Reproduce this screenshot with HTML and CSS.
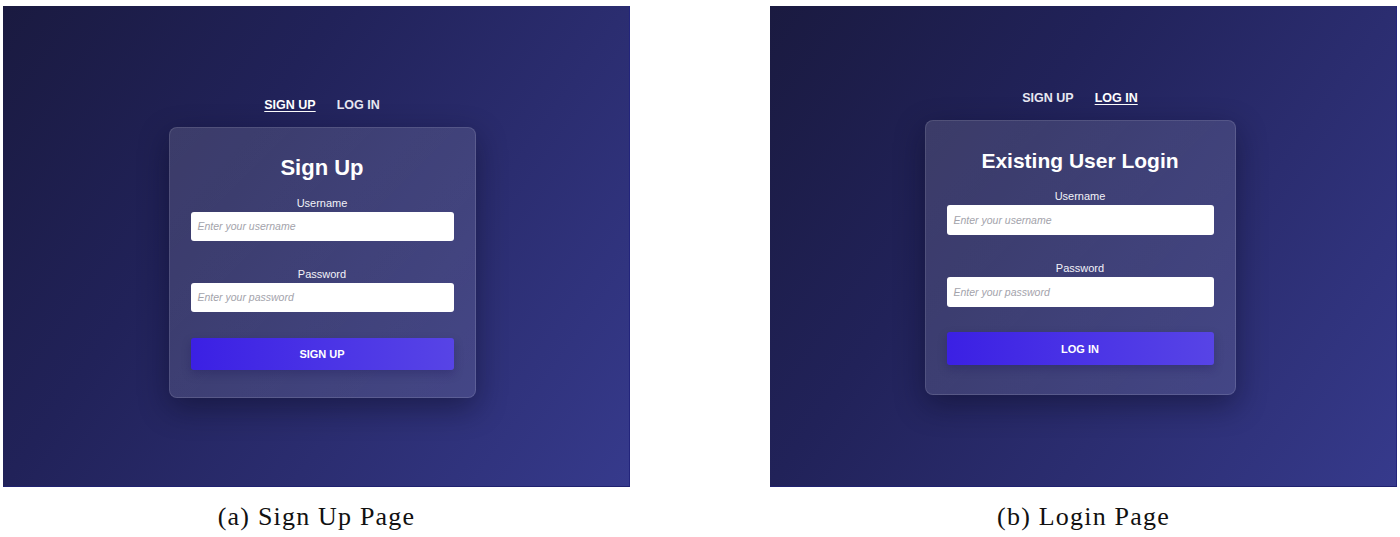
FILE: index.html
```html
<!DOCTYPE html>
<html>
<head>
<meta charset="utf-8">
<link rel="stylesheet" href="styles.css">
</head>
<body>
<div class="figure">
  <div class="sub sub-a">
    <div class="shot">
      <div class="content content-a">
        <nav class="tabs">
          <span class="tab active">SIGN UP</span>
          <span class="tab">LOG IN</span>
        </nav>
        <div class="card card-a">
          <h1 class="title">Sign Up</h1>
          <label class="label">Username</label>
          <div class="input"><span class="ph">Enter your username</span></div>
          <label class="label label-gap">Password</label>
          <div class="input"><span class="ph">Enter your password</span></div>
          <div class="btn">SIGN UP</div>
        </div>
      </div>
    </div>
    <div class="caption">(a) Sign Up Page</div>
  </div>
  <div class="sub sub-b">
    <div class="shot">
      <div class="content content-b">
        <nav class="tabs">
          <span class="tab">SIGN UP</span>
          <span class="tab active">LOG IN</span>
        </nav>
        <div class="card card-b">
          <h1 class="title title-b">Existing User Login</h1>
          <label class="label">Username</label>
          <div class="input"><span class="ph">Enter your username</span></div>
          <label class="label label-gap">Password</label>
          <div class="input"><span class="ph">Enter your password</span></div>
          <div class="btn">LOG IN</div>
        </div>
      </div>
    </div>
    <div class="caption">(b) Login Page</div>
  </div>
</div>
</body>
</html>
```
FILE: styles.css
```css
* { box-sizing: border-box; }
html, body { margin: 0; padding: 0; background: #ffffff; }
body { width: 1400px; height: 537px; overflow: hidden; }

.figure {
  display: flex;
  gap: 140px;
  padding: 6px 0 0 3px;
}

.sub { width: 627px; display: flex; flex-direction: column; }

.shot {
  width: 627px;
  height: 481px;
  background: linear-gradient(125deg, #1a1a40 0%, #212259 35%, #2b2d70 65%, #363a8c 100%);
  border-right: 1px solid #23257c;
  border-bottom: 1px solid #1f2170;
  display: flex;
  align-items: center;
  justify-content: center;
  font-family: "Liberation Sans", Arial, sans-serif;
  color: #ffffff;
}

.content { display: flex; flex-direction: column; align-items: center; }
.content-a { margin-left: 12px; margin-top: 3px; }
.content-b { margin-left: -6px; margin-top: -6px; }

.tabs { display: flex; gap: 21px; margin-bottom: 14px; }
.tab {
  font-size: 12.5px;
  font-weight: bold;
  color: #e8e8f2;
  line-height: 15px;
}
.tab.active { text-decoration: underline; text-underline-offset: 2px; color: #ffffff; }

.card {
  background: linear-gradient(135deg, rgba(255,255,255,0.13), rgba(255,255,255,0.10));
  border: 1px solid rgba(255,255,255,0.12);
  border-radius: 8px;
  box-shadow: 0 10px 30px rgba(8,8,30,0.45);
  padding: 26px 21px 27px;
  display: flex;
  flex-direction: column;
  align-items: stretch;
}
.card-a { width: 307px; }
.card-b { width: 311px; padding-bottom: 29px; }

.title {
  margin: 0 0 14px;
  font-size: 22px;
  line-height: 28px;
  font-weight: bold;
  text-align: center;
  color: #ffffff;
}
.title-b { font-size: 21px; }

.label {
  display: block;
  text-align: center;
  font-size: 11px;
  line-height: 14px;
  color: #f2f2f8;
  margin-bottom: 2px;
}
.label-gap { margin-top: 26px; }

.input {
  height: 29px;
  background: #ffffff;
  border-radius: 3px;
  padding: 0 7px;
  display: flex;
  align-items: center;
}
.card-b .input { height: 30px; }
.ph {
  font-size: 10.5px;
  font-style: italic;
  color: #a3a3ab;
}

.btn {
  margin-top: 26px;
  height: 32px;
  border-radius: 3px;
  background: linear-gradient(90deg, #3b20e4 0%, #4a33e6 50%, #5744e6 100%);
  color: #ffffff;
  font-size: 11px;
  font-weight: bold;
  display: flex;
  align-items: center;
  justify-content: center;
  box-shadow: 0 4px 10px rgba(20,10,80,0.25);
}
.card-b .btn { margin-top: 25px; height: 33px; }

.caption {
  margin-top: 15px;
  text-align: center;
  font-family: "Liberation Serif", "Times New Roman", serif;
  font-size: 26px;
  letter-spacing: 1.2px;
  line-height: 30px;
  color: #111111;
}
```
